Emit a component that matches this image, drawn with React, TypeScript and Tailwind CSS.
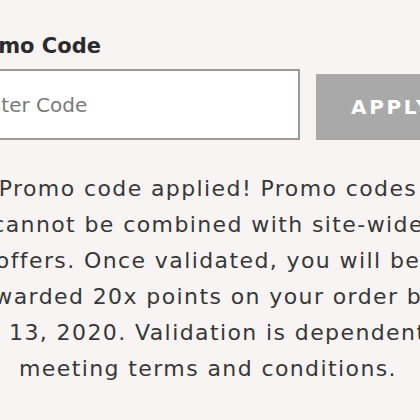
import React from "react";

const bodyFont = { fontFamily: '"DejaVu Sans", sans-serif' };

export default function App() {
  return (
    <div className="w-[420px] h-[420px] overflow-hidden bg-[#f7f4f3]">
      <div className="ml-[-42px] w-[510px] pt-[32px]">
        <label
          htmlFor="promo"
          className="block text-[21px] leading-[28px] font-bold text-[#2b2b2b] font-['DejaVu_Sans',sans-serif]"
        >
          Promo Code
        </label>

        <div className="mt-[9px] flex items-end gap-4">
          <input
            id="promo"
            type="text"
            placeholder="Enter Code"
            className="w-[342px] h-[71px] border-2 border-[#9a9a9a] bg-white pl-[16px] text-[20px] text-[#333] placeholder:text-[#7a7a7a] outline-none font-['DejaVu_Sans',sans-serif]"
          />
          <button className="w-[152px] h-[66px] bg-[#a9a9a9] text-white text-[20px] font-bold tracking-[2.6px] font-['DejaVu_Sans',sans-serif]">
            APPLY
          </button>
        </div>

        <p
          className="mt-[31px] ml-[-50px] w-[600px] whitespace-nowrap text-center text-[22px] leading-[36px] tracking-[1.4px] text-[#383838]"
          style={bodyFont}
        >
          Promo code applied! Promo codes
          <br />
          cannot be combined with site-wide
          <br />
          offers. Once validated, you will be
          <br />
          awarded 20x points on your order by
          <br />
          May 13, 2020. Validation is dependent on
          <br />
          meeting terms and conditions.
        </p>
      </div>
    </div>
  );
}
